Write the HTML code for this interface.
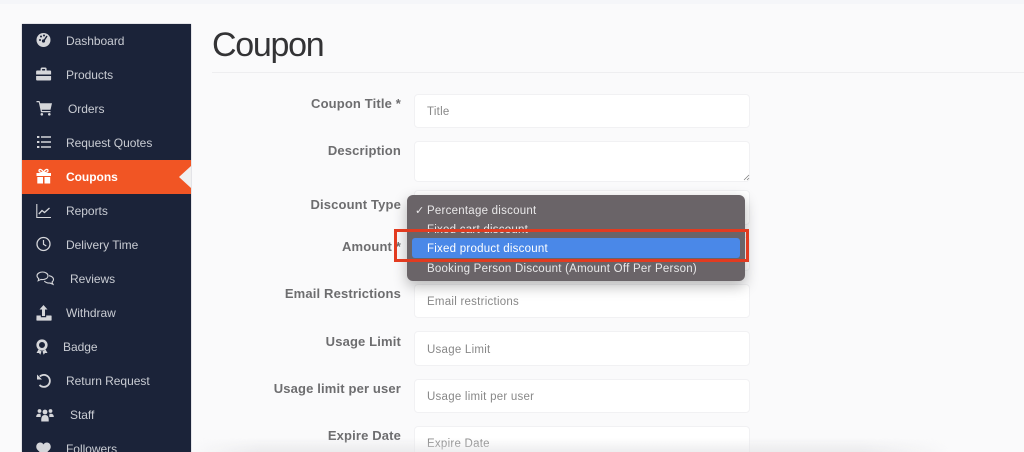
<!DOCTYPE html>
<html><head><meta charset="utf-8"><style>
html,body{margin:0;padding:0;width:1024px;height:452px;overflow:hidden;background:#fafafb;font-family:"Liberation Sans",sans-serif}
#wrap{position:relative;width:1024px;height:452px;overflow:hidden;background:#fafafb;filter:blur(.35px)}
.a{position:absolute}
#top{left:0;top:0;width:1024px;height:4px;background:#f5f6f9}
#side{left:22px;top:24px;width:169px;height:428px;background:#1b2339;box-shadow:0 0 1px #889}
.m{position:absolute;color:#c9ccd3;font-size:12px;line-height:16px;white-space:nowrap;letter-spacing:-.03px}
.i{position:absolute;left:36px;width:16px;height:16px;overflow:visible}
.l{position:absolute;right:623px;color:#6d6d6f;font-weight:bold;font-size:13px;line-height:16px;white-space:nowrap;letter-spacing:.15px}
.f{position:absolute;left:414px;width:336px;background:#fff;border-radius:4px;box-shadow:inset 0 0 0 1px #f1f1f3;color:#888;font-size:11.5px;box-sizing:border-box;padding-left:13px;white-space:nowrap;letter-spacing:.25px}
.o{position:absolute;left:427px;color:#e9e8e9;font-size:11.5px;line-height:16px;white-space:nowrap;letter-spacing:.24px}
</style></head><body><div id="wrap">
<div class="a" id="top"></div>
<div class="a" id="side"></div>
<div class="a" style="left:22px;top:160px;width:169px;height:34px;background:#f15524"></div>
<div class="a" style="left:179px;top:166px;width:0;height:0;border-top:11px solid transparent;border-bottom:11px solid transparent;border-right:12px solid #f0f0f0"></div>

<svg class="i" style="top:32px" viewBox="0 0 16 16"><circle cx="7.500" cy="8" r="7" fill="#d5d6da"/><circle cx="7.500" cy="9" r="1.600" fill="#1b2339"/><path d="M8 8.500 11 4" stroke="#1b2339" stroke-width="1.400"/><circle cx="4" cy="8" r="1" fill="#1b2339"/><circle cx="5" cy="4.500" r="1" fill="#1b2339"/><circle cx="8" cy="3.500" r="1" fill="#1b2339"/></svg>
<svg class="i" style="top:66px" viewBox="0 0 16 16"><path d="M0.500 5.500a1 1 0 0 1 1-1H5V3a1.500 1.500 0 0 1 1.500-1.500h3A1.500 1.500 0 0 1 11 3v1.500h3.500a1 1 0 0 1 1 1V8.500H.5zM6.500 3v1.500h3V3zM.5 10h15v3.500a1 1 0 0 1-1 1h-13a1 1 0 0 1-1-1z" fill="#d5d6da" transform="translate(-.4 0)"/></svg>
<svg class="i" style="top:100px" viewBox="0 0 16 16"><path d="M.5 1H3.500L4.200 3.300H16L14.500 9.700H5.700L6 11H14.500V12.200H5L2.800 2.200H.5z" fill="#d5d6da"/><circle cx="5.800" cy="14.300" r="1.300" fill="#d5d6da"/><circle cx="13.300" cy="14.300" r="1.300" fill="#d5d6da"/></svg>
<svg class="i" style="top:134px" viewBox="0 0 16 16"><path d="M5 3H15M5 8H15M5 13H15" stroke="#d5d6da" stroke-width="1.500"/><path d="M1 2h2.400v2H1zM1 7h2.400v2H1zM1 12h2.400v2H1z" fill="#d5d6da"/></svg>
<svg class="i" style="top:168px" viewBox="0 0 16 16"><path d="M.5 5H15V8H.5zM1.300 9H7V15.500H1.300zM8.500 9H14.200V15.500H8.500z" fill="#fff"/><path d="M7.500 4.500C6 1 3 .5 3 2.700 3 4.300 5.500 4.500 7.500 4.500 9.500 4.500 12 4.300 12 2.700 12 .5 9 1 7.500 4.500z" fill="none" stroke="#fff" stroke-width="1.300"/></svg>
<svg class="i" style="top:203px" viewBox="0 0 16 16"><path d="M.8 1V14.500H15" fill="none" stroke="#d5d6da" stroke-width="1.100"/><path d="M2.800 11 6 7.500 8.500 9.500 13.500 5" fill="none" stroke="#d5d6da" stroke-width="1.300"/></svg>
<svg class="i" style="top:236px" viewBox="0 0 16 16"><circle cx="7.500" cy="8" r="6.500" fill="none" stroke="#d5d6da" stroke-width="1.300"/><path d="M7.500 4V8.300L10.300 10" fill="none" stroke="#d5d6da" stroke-width="1.200"/></svg>
<svg class="i" style="top:270px;width:19px" viewBox="0 0 19 16"><path d="M6.500 2C3.500 2 1 3.700 1 5.800 1 7 1.800 8 2.800 8.700L2.200 10.700 5 9.400C6 9.600 7.200 9.600 8 9.400 10.500 9 12 7.500 12 5.800 12 3.700 9.500 2 6.500 2z" fill="none" stroke="#d5d6da" stroke-width="1.100"/><path d="M13 5.700C15.500 6.200 17.500 7.500 17.500 9.500 17.500 10.700 16.800 11.500 16 12.200L17 14.300 13.800 13C11.500 13.300 9.500 12.300 8.300 11" fill="none" stroke="#d5d6da" stroke-width="1.100"/></svg>
<svg class="i" style="top:305px" viewBox="0 0 16 16"><path d="M7.500 0 11.500 4.500H9V11H6V4.500H3.500z" fill="#d5d6da"/><path d="M.5 10.500H4.800V12.300H10.200V10.500H15a.6.6 0 0 1 .6.6V15a.6.6 0 0 1-.6.6H1a.6.6 0 0 1-.6-.6z" fill="#d5d6da"/></svg>
<svg class="i" style="top:339px;left:36px;width:14px;height:16px" viewBox="0 0 14 16"><circle cx="6" cy="6" r="4.300" fill="none" stroke="#d5d6da" stroke-width="2.600"/><path d="M2.500 10.500 .5 14H3L4.300 15.700 5.500 12.500zM9.500 10.500 11.500 14H9L7.700 15.700 6.500 12.500z" fill="#d5d6da"/></svg>
<svg class="i" style="top:373px" viewBox="0 0 16 16"><path d="M3.300 3.500A6 6 0 1 1 3 12" fill="none" stroke="#d5d6da" stroke-width="1.800" transform="translate(.5 0)"/><path d="M1 1.500V6.500H6z" fill="#d5d6da"/></svg>
<svg class="i" style="top:407px;width:18px" viewBox="0 0 18 16"><g fill="#d5d6da"><circle cx="3.500" cy="4" r="1.900"/><circle cx="14.500" cy="4" r="1.900"/><circle cx="9" cy="5" r="2.400"/><path d="M.2 10C.2 7 2 6.500 4.500 6.800 4.600 8 5 9 4.600 10zM17.800 10C17.800 7 16 6.500 13.500 6.800 13.400 8 13 9 13.400 10zM5.300 14.500C5 10 6 8 9 8 12 8 13 10 12.700 14.500z"/></g></svg>
<svg class="i" style="top:441px" viewBox="0 0 16 16"><path d="M7.500 15 1.200 8.500C-1 5.500 1 1.500 4 1.500 5.700 1.500 6.800 2.300 7.500 3.500 8.200 2.300 9.300 1.500 11 1.500 14 1.500 16 5.500 13.800 8.500z" fill="#d5d6da"/></svg>

<div class="m" style="left:66px;top:33px">Dashboard</div>
<div class="m" style="left:66px;top:67px">Products</div>
<div class="m" style="left:68px;top:101px">Orders</div>
<div class="m" style="left:66px;top:135px">Request Quotes</div>
<div class="m" style="left:66px;top:169px;color:#fff;font-weight:bold">Coupons</div>
<div class="m" style="left:66px;top:203px">Reports</div>
<div class="m" style="left:66px;top:237px">Delivery Time</div>
<div class="m" style="left:70px;top:271px">Reviews</div>
<div class="m" style="left:66px;top:305px">Withdraw</div>
<div class="m" style="left:63px;top:339px">Badge</div>
<div class="m" style="left:66px;top:373px">Return Request</div>
<div class="m" style="left:70px;top:407px">Staff</div>
<div class="m" style="left:66px;top:441px">Followers</div>

<div class="a" style="left:212px;top:24px;font-size:34px;line-height:42px;color:#333335;letter-spacing:-1.3px">Coupon</div>
<div class="a" style="left:212px;top:72px;width:812px;height:1px;background:#eeeef0"></div>

<div class="l" style="top:96px">Coupon Title *</div>
<div class="l" style="top:143px">Description</div>
<div class="l" style="top:197px">Discount Type</div>
<div class="l" style="top:239px">Amount *</div>
<div class="l" style="top:286px">Email Restrictions</div>
<div class="l" style="top:334px">Usage Limit</div>
<div class="l" style="top:381px">Usage limit per user</div>
<div class="l" style="top:428px">Expire Date</div>

<div class="f" style="top:94px;height:34px;line-height:37px">Title</div>
<div class="f" style="top:141px;height:41px"></div>
<svg class="a" style="left:743px;top:174px" width="7" height="7" viewBox="0 0 7 7"><path d="M1 6 6 1M4 6 6 4" stroke="#777" stroke-width=".7"/></svg>
<div class="f" style="top:190px;height:35px"></div>
<div class="f" style="top:237px;height:34px"></div>
<div class="f" style="top:284px;height:34px;line-height:37px">Email restrictions</div>
<div class="f" style="top:331px;height:35px;line-height:38px">Usage Limit</div>
<div class="f" style="top:379px;height:34px;line-height:37px">Usage limit per user</div>
<div class="f" style="top:426px;height:34px;line-height:37px">Expire Date</div>

<div class="a" style="left:0;top:438px;width:950px;height:14px;background:linear-gradient(to bottom,rgba(225,225,228,0),rgba(225,225,228,.6));-webkit-mask-image:linear-gradient(to right,transparent 190px,#000 260px,#000 860px,transparent 950px)"></div>

<div class="a" style="left:407px;top:195px;width:338px;height:86px;border-radius:6px;background:#6a6468;box-shadow:0 5px 14px rgba(0,0,0,.28)"></div>
<div class="a" style="left:412px;top:238px;width:328px;height:20px;border-radius:3px;background:#4a88e8"></div>
<div class="o" style="left:415px;top:203px;font-size:11px">✓</div>
<div class="o" style="top:203px">Percentage discount</div>
<div class="o" style="top:222px">Fixed cart discount</div>
<div class="o" style="top:241px;color:#fff">Fixed product discount</div>
<div class="o" style="top:261px">Booking Person Discount (Amount Off Per Person)</div>
<div class="a" style="left:394px;top:229px;width:355px;height:33px;border:3px solid #e23b20;box-sizing:border-box"></div>
</div></body></html>
